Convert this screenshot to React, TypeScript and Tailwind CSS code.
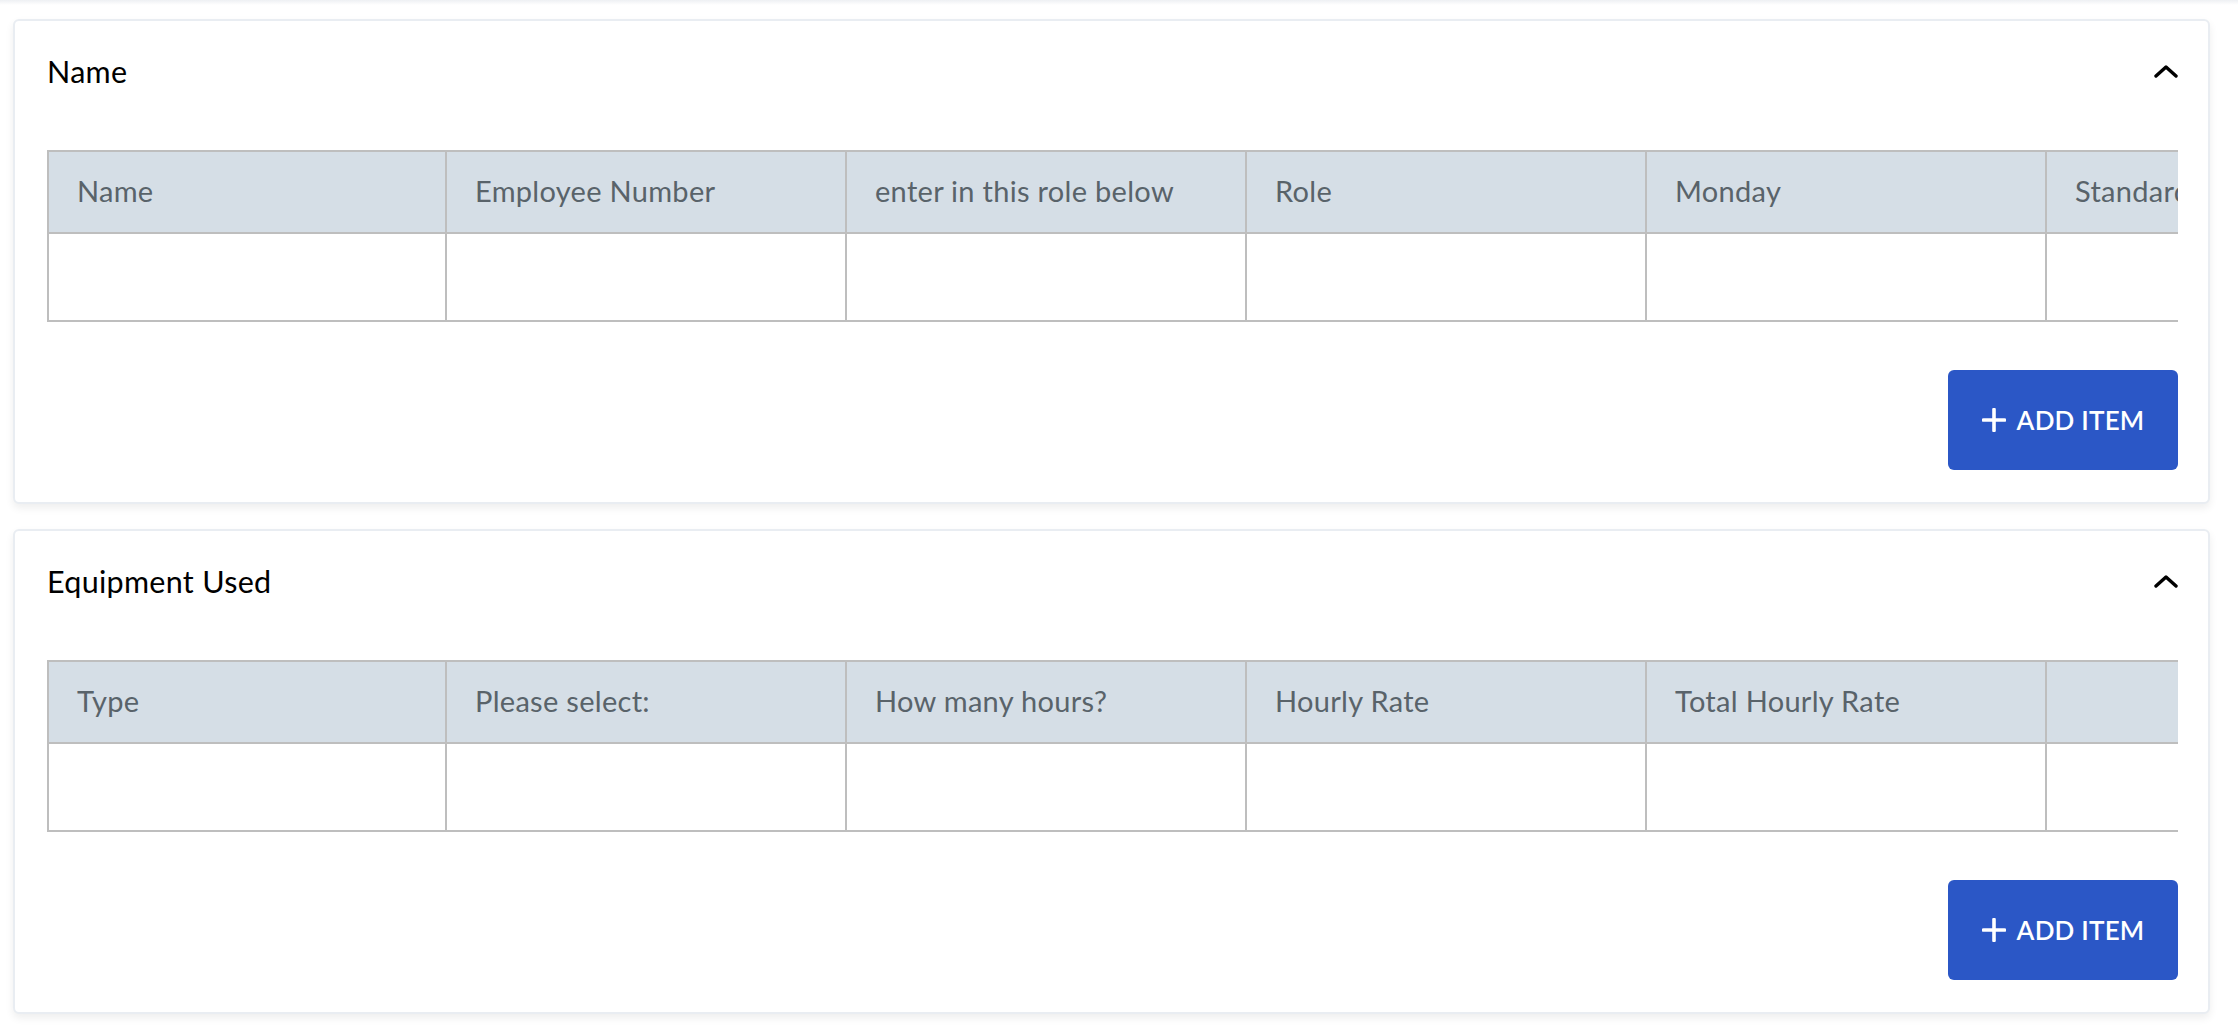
import React from "react";

const font = { fontFamily: "Lato, 'Open Sans', 'Liberation Sans', sans-serif" };

function Chevron() {
  return (
    <svg width="24" height="14" viewBox="0 0 24 14" fill="none">
      <polyline points="2,12 12,3 22,12" stroke="#000" strokeWidth="3.4" strokeLinecap="round" strokeLinejoin="round" />
    </svg>
  );
}

function Plus() {
  return (
    <svg width="24" height="24" viewBox="0 0 24 24" fill="none">
      <line x1="12" y1="1.5" x2="12" y2="22.5" stroke="#fff" strokeWidth="3.6" strokeLinecap="round" />
      <line x1="1.5" y1="12" x2="22.5" y2="12" stroke="#fff" strokeWidth="3.6" strokeLinecap="round" />
    </svg>
  );
}

function Card({ title, columns }: { title: string; columns: string[] }) {
  return (
    <div className="bg-white border-2 border-[#e9edf2] rounded-[6px] shadow-[0_4px_8px_rgba(0,0,0,0.07)] pl-[32px] pr-[30px] pt-[30px] pb-[32px]">
      <div className="h-[40px] flex items-center justify-between">
        <div className="text-[30.5px] leading-none text-black tracking-[0.3px]">{title}</div>
        <Chevron />
      </div>
      <div className="mt-[59px] overflow-hidden border-t-2 border-b-2 border-l-2 border-[#bebebe]">
        <div className="flex">
          {columns.map((c, i) => (
            <div
              key={i}
              className={`${i === 0 ? "w-[398px]" : "w-[400px]"} shrink-0 h-[80px] bg-[#d5dee6] border-r-2 border-[#bebebe] flex items-center pl-[28px] pb-[3px] text-[29px] tracking-[0.3px] text-[#59636a] whitespace-nowrap overflow-hidden`}
            >
              {c}
            </div>
          ))}
        </div>
        <div className="flex border-t-2 border-[#bebebe]">
          {columns.map((_, i) => (
            <div key={i} className={`${i === 0 ? "w-[398px]" : "w-[400px]"} shrink-0 h-[86px] bg-white border-r-2 border-[#bebebe]`} />
          ))}
        </div>
      </div>
      <div className="mt-[48px] flex justify-end">
        <button className="h-[100px] w-[230px] rounded-[6px] bg-[#2b57c6] text-white flex items-center justify-center gap-[11px] text-[26px] font-semibold tracking-[0.2px]">
          <Plus />
          <span>ADD ITEM</span>
        </button>
      </div>
    </div>
  );
}

export default function App() {
  return (
    <div className="min-h-[1032px] w-[2238px] bg-white relative" style={font}>
      <div className="h-[5px] bg-gradient-to-b from-[#eef0f3] to-white" />
      <div className="pl-[13px] pr-[28px] pt-[14px] pb-[20px] flex flex-col gap-[25px]">
        <Card
          title="Name"
          columns={["Name", "Employee Number", "enter in this role below", "Role", "Monday", "Standard Hours", "Tuesday"]}
        />
        <Card
          title="Equipment Used"
          columns={["Type", "Please select:", "How many hours?", "Hourly Rate", "Total Hourly Rate", "", ""]}
        />
      </div>
    </div>
  );
}
